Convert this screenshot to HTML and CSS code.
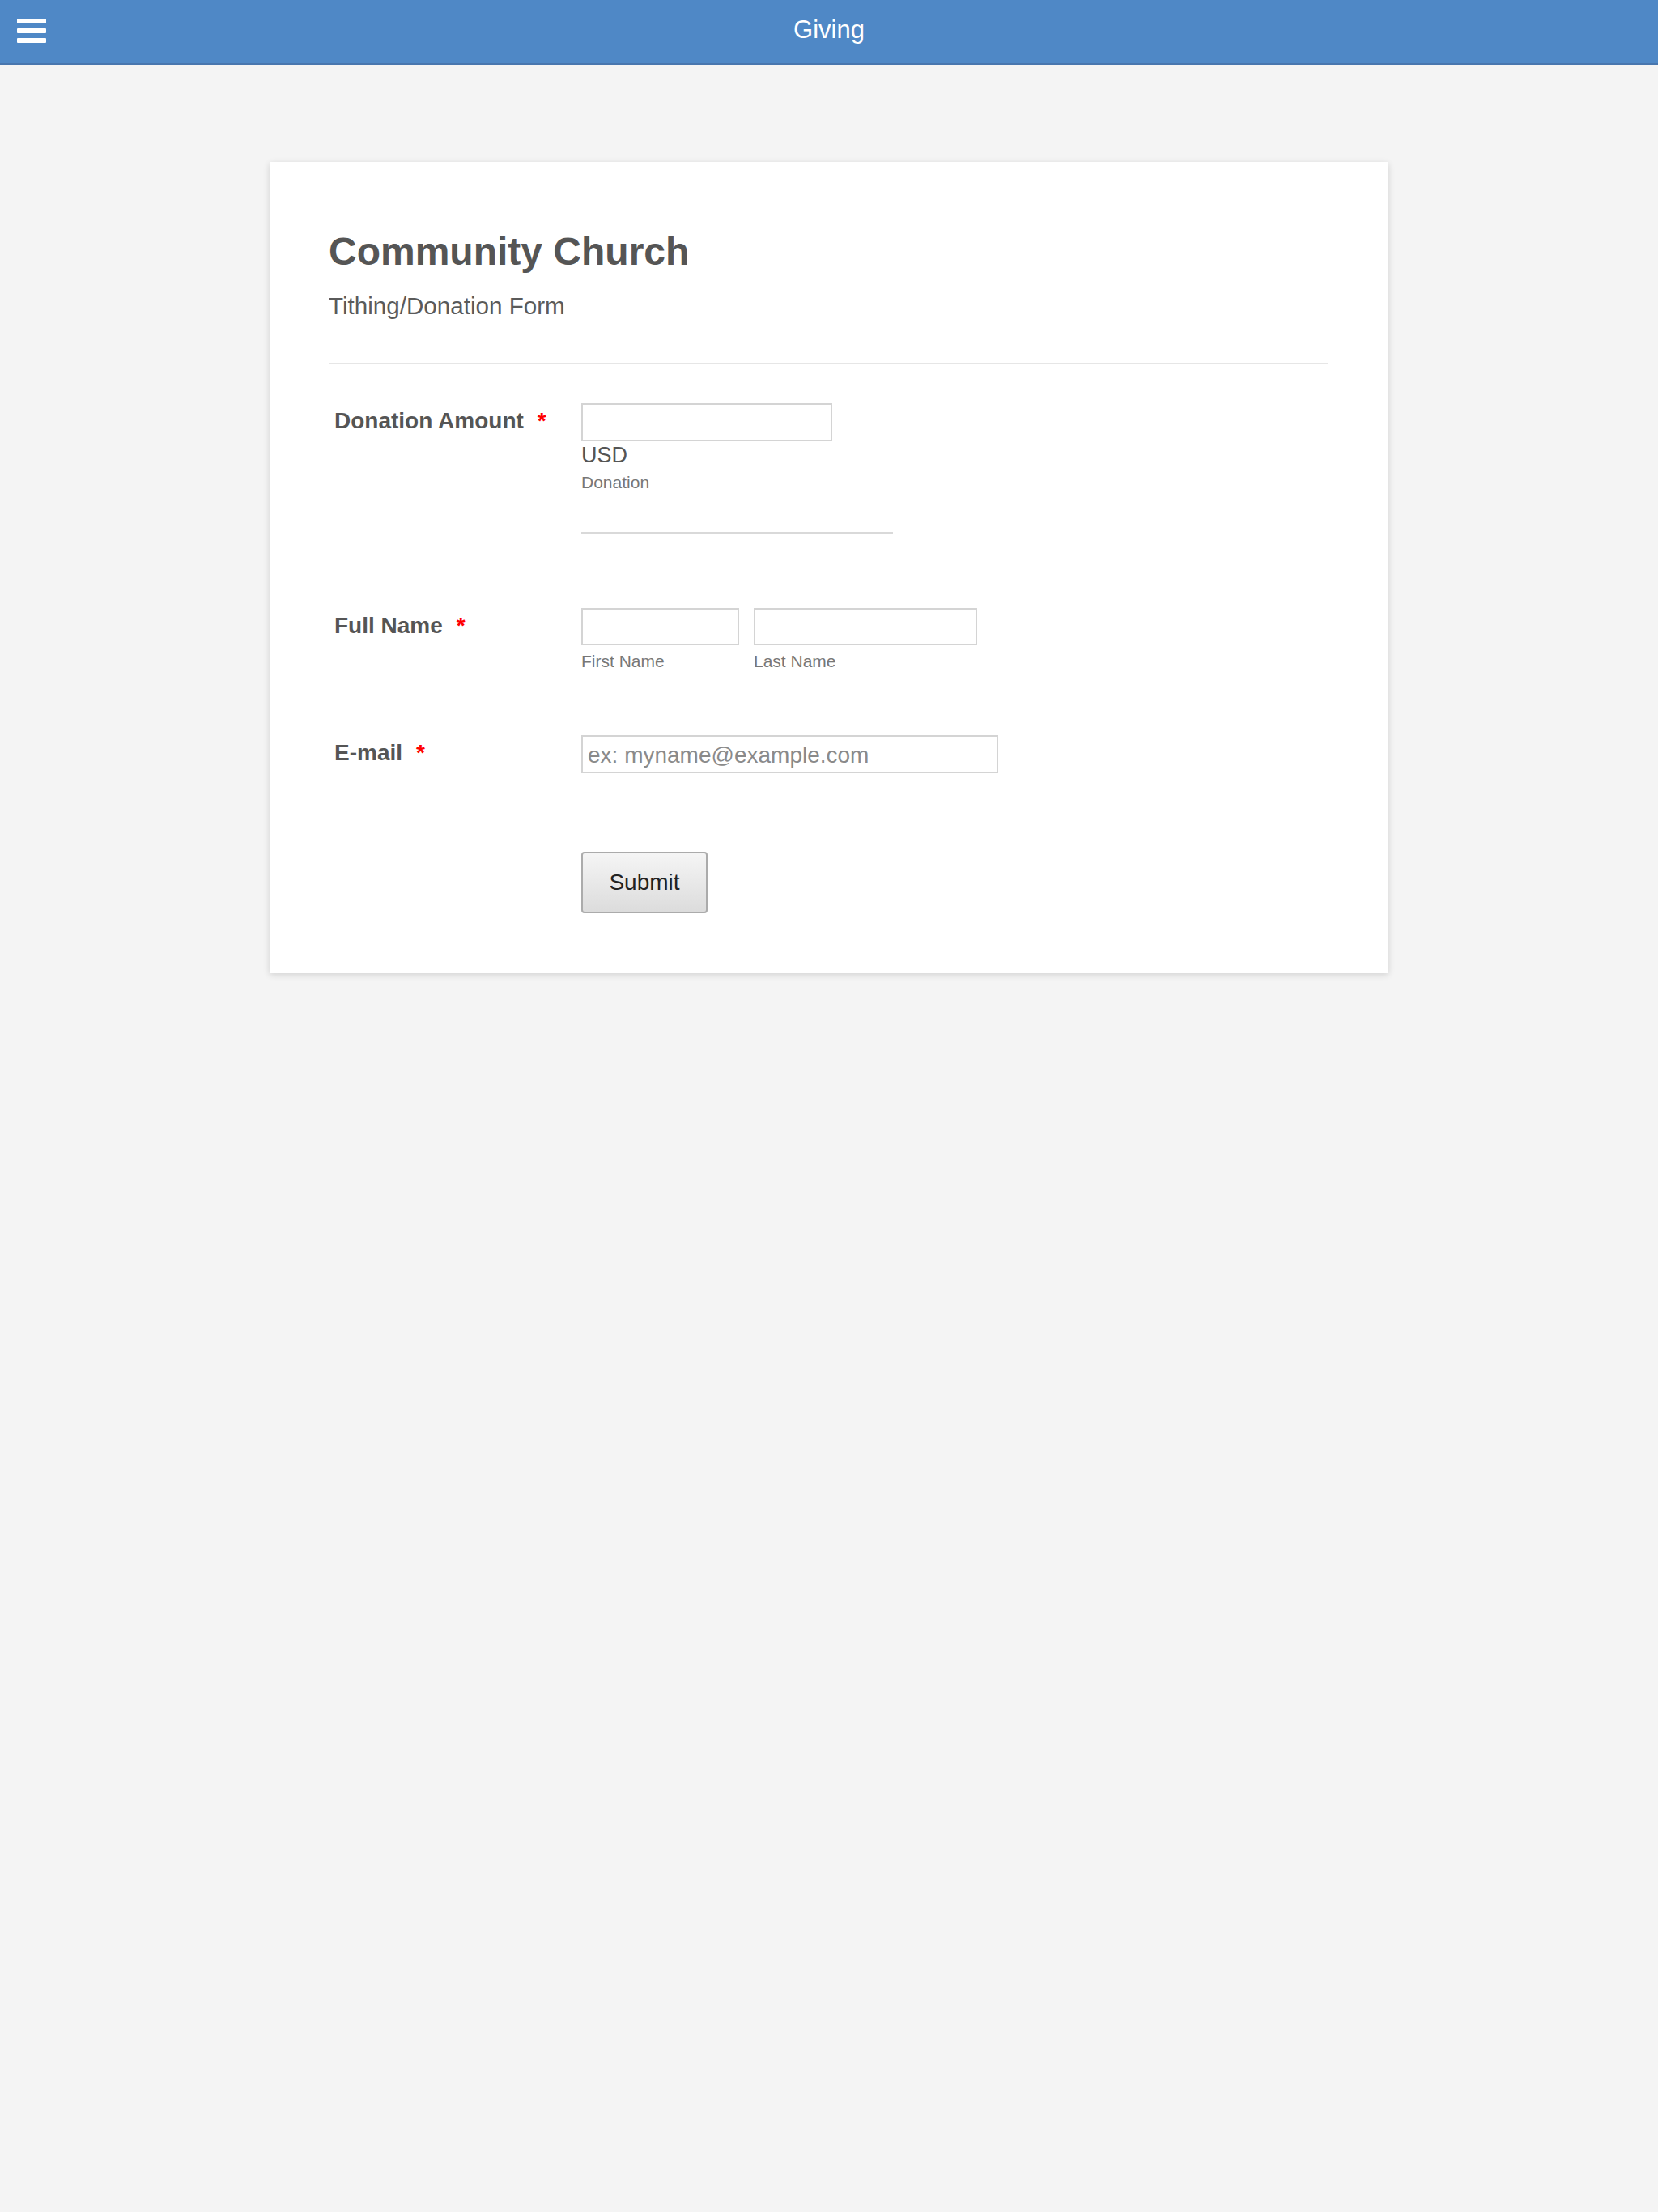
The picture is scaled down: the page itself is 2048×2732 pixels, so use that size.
FILE: index.html
```html
<html>

	<head>
		<meta charset="utf-8">
		<title>Giving</title>
		<link rel="stylesheet" href="styles.css">
	</head>

	<body>
		<header class="topbar">
			<div class="menu"><i></i><i></i><i></i></div>
			<div class="topbar-title">Giving</div>
			<div></div>
		</header>

		<div class="card">
			<div class="form-head">
				<h2 class="form-title">Community Church</h2>
				<p class="form-desc">Tithing/Donation Form</p>
			</div>

			<div class="line line-donation">
				<label class="label">Donation Amount<span class="req">*</span></label>
				<div class="field">
					<input type="text" class="input input-amount" />
					<div class="currency">USD</div>
					<div class="sublabel sub-donation">Donation</div>
					<div class="rule"></div>
				</div>
			</div>

			<div class="line line-name">
				<label class="label">Full Name<span class="req">*</span></label>
				<div class="field name-field">
					<div class="name-part">
						<input type="text" class="input input-first" />
						<div class="sublabel">First Name</div>
					</div>
					<div class="name-part">
						<input type="text" class="input input-last" />
						<div class="sublabel">Last Name</div>
					</div>
				</div>
			</div>

			<div class="line line-email">
				<label class="label">E-mail<span class="req">*</span></label>
				<div class="field">
					<input type="text" class="input input-email" placeholder="ex: myname@example.com" />
				</div>
			</div>

			<div class="line line-submit">
				<button class="submit">Submit</button>
			</div>
		</div>
	</body>

</html>
```

FILE: styles.css
```css
* {
	margin: 0;
	padding: 0;
	box-sizing: border-box;
}

body {
	background: #f4f4f4;
	font-family: "Liberation Sans", Arial, sans-serif;
	color: #555;
}

.topbar {
	display: grid;
	grid-template-columns: 1fr auto 1fr;
	align-items: center;
	height: 80px;
	background: #4f88c6;
	border-bottom: 2px solid #4876ae;
}

.menu {
	display: flex;
	flex-direction: column;
	gap: 6px;
	padding-left: 21px;
	margin-top: -2px;
}

.menu i {
	display: block;
	width: 36px;
	height: 6px;
	background: #fff;
	border-radius: 1px;
}

.topbar-title {
	color: #fff;
	font-size: 31px;
	line-height: 72px;
	margin-bottom: 4px;
}

.card {
	width: 1382px;
	margin: 120px auto 0;
	padding: 83px 75px 74px 73px;
	background: #fff;
	box-shadow: 0 2px 8px rgba(0, 0, 0, .14);
}

.form-head {
	padding-bottom: 53px;
	border-bottom: 2px solid #e6e6e6;
}

.form-title {
	font-size: 48px;
	line-height: 56px;
	font-weight: bold;
	color: #555;
}

.form-desc {
	margin-top: 22px;
	font-size: 29.6px;
	line-height: 34px;
	color: #5a5a5a;
}

.line {
	display: flex;
	align-items: flex-start;
}

.line-donation {
	margin-top: 48px;
}

.line-name {
	margin-top: 92px;
}

.line-email {
	margin-top: 79px;
}

.line-submit {
	margin-top: 97px;
	padding-left: 312px;
}

.label {
	width: 312px;
	flex: none;
	padding: 6px 0 0 7px;
	font-size: 28px;
	line-height: 32px;
	font-weight: bold;
	color: #555;
}

.req {
	margin-left: 17px;
	color: #f00;
}

.input {
	display: block;
	height: 47px;
	border: 2px solid #d4d4d4;
	background: #fff;
	font-family: "Liberation Sans", Arial, sans-serif;
	font-size: 28px;
	padding: 3px 6px 0;
	color: #555;
}

.input::placeholder {
	color: #8a8a8a;
}

.input-amount {
	width: 310px;
}

.currency {
	margin-top: 2px;
	font-size: 27px;
	line-height: 31px;
	color: #555;
}

.sublabel {
	margin-top: 8px;
	font-size: 21px;
	line-height: 24px;
	color: #777;
}

.sub-donation {
	margin-top: 6px;
}

.rule {
	width: 385px;
	margin-top: 49px;
	border-top: 2px solid #d9d9d9;
}

.name-field {
	display: flex;
	gap: 18px;
}

.input-first {
	width: 195px;
	height: 46px;
}

.input-last {
	width: 276px;
	height: 46px;
}

.input-email {
	width: 515px;
}

.submit {
	width: 156px;
	height: 76px;
	border: 2px solid #ababab;
	border-radius: 4px;
	background: linear-gradient(#f5f5f5, #dcdcdc);
	font-family: "Liberation Sans", Arial, sans-serif;
	font-size: 28px;
	color: #222;
}
```
